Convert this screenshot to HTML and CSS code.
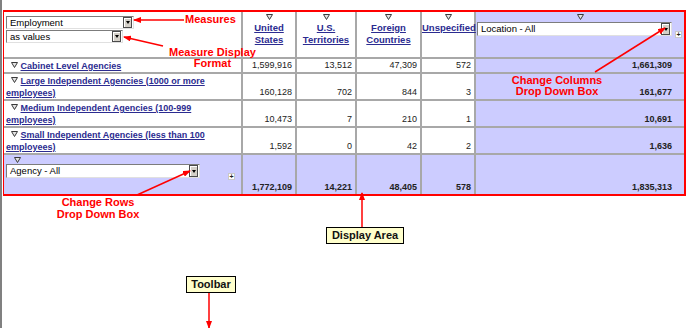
FILE: index.html
```html
<!DOCTYPE html>
<html>
<head>
<meta charset="utf-8">
<link rel="stylesheet" href="styles.css">
</head>
<body>
<div class="page">
  <div class="frame">
    <table class="grid">
      <colgroup>
        <col class="c1"><col class="c2"><col class="c3"><col class="c4"><col class="c5"><col class="c6">
      </colgroup>
      <tr class="r-head">
        <td class="corner">
          <div class="sel w-emp"><span class="sel-text">Employment</span><span class="btn"><i></i></span></div>
          <div class="sel w-val"><span class="sel-text">as values</span><span class="btn"><i></i></span></div>
        </td>
        <td class="colh"><svg class="tri" width="7" height="6" viewBox="0 0 7 6"><path d="M0.5 0.5H6.5L3.5 5.5Z" fill="#e4e4e4" stroke="#3a3a3a" stroke-width="1"/></svg><a href="#">United States</a></td>
        <td class="colh"><svg class="tri" width="7" height="6" viewBox="0 0 7 6"><path d="M0.5 0.5H6.5L3.5 5.5Z" fill="#e4e4e4" stroke="#3a3a3a" stroke-width="1"/></svg><a href="#">U.S. Territories</a></td>
        <td class="colh"><svg class="tri" width="7" height="6" viewBox="0 0 7 6"><path d="M0.5 0.5H6.5L3.5 5.5Z" fill="#e4e4e4" stroke="#3a3a3a" stroke-width="1"/></svg><a href="#">Foreign Countries</a></td>
        <td class="colh"><svg class="tri" width="7" height="6" viewBox="0 0 7 6"><path d="M0.5 0.5H6.5L3.5 5.5Z" fill="#e4e4e4" stroke="#3a3a3a" stroke-width="1"/></svg><a href="#">Unspecified</a></td>
        <td class="colh tot">
          <svg class="tri" width="7" height="6" viewBox="0 0 7 6"><path d="M0.5 0.5H6.5L3.5 5.5Z" fill="#e4e4e4" stroke="#3a3a3a" stroke-width="1"/></svg>
          <div class="sel-row">
            <div class="sel w-loc"><span class="sel-text">Location - All</span><span class="btn"><i></i></span></div>
            <span class="plus">+</span>
          </div>
        </td>
      </tr>
      <tr class="r-short">
        <td class="rowh"><svg class="tri rtri" width="7" height="6" viewBox="0 0 7 6"><path d="M0.5 0.5H6.5L3.5 5.5Z" fill="#e4e4e4" stroke="#3a3a3a" stroke-width="1"/></svg> <a href="#">Cabinet Level Agencies</a></td>
        <td class="num">1,599,916</td><td class="num">13,512</td><td class="num">47,309</td><td class="num">572</td><td class="num tot">1,661,309</td>
      </tr>
      <tr class="r-tall">
        <td class="rowh"><svg class="tri rtri" width="7" height="6" viewBox="0 0 7 6"><path d="M0.5 0.5H6.5L3.5 5.5Z" fill="#e4e4e4" stroke="#3a3a3a" stroke-width="1"/></svg> <a href="#">Large Independent Agencies (1000 or more employees)</a></td>
        <td class="num">160,128</td><td class="num">702</td><td class="num">844</td><td class="num">3</td><td class="num tot">161,677</td>
      </tr>
      <tr class="r-tall">
        <td class="rowh"><svg class="tri rtri" width="7" height="6" viewBox="0 0 7 6"><path d="M0.5 0.5H6.5L3.5 5.5Z" fill="#e4e4e4" stroke="#3a3a3a" stroke-width="1"/></svg> <a href="#">Medium Independent Agencies (100-999 employees)</a></td>
        <td class="num">10,473</td><td class="num">7</td><td class="num">210</td><td class="num">1</td><td class="num tot">10,691</td>
      </tr>
      <tr class="r-tall">
        <td class="rowh"><svg class="tri rtri" width="7" height="6" viewBox="0 0 7 6"><path d="M0.5 0.5H6.5L3.5 5.5Z" fill="#e4e4e4" stroke="#3a3a3a" stroke-width="1"/></svg> <a href="#">Small Independent Agencies (less than 100 employees)</a></td>
        <td class="num">1,592</td><td class="num">0</td><td class="num">42</td><td class="num">2</td><td class="num tot">1,636</td>
      </tr>
      <tr class="r-total">
        <td class="totalh">
          <svg class="tri rtri" width="7" height="6" viewBox="0 0 7 6"><path d="M0.5 0.5H6.5L3.5 5.5Z" fill="#e4e4e4" stroke="#3a3a3a" stroke-width="1"/></svg>
          <div class="sel-row">
            <div class="sel w-agy"><span class="sel-text">Agency - All</span><span class="btn"><i></i></span></div>
            <span class="plus">+</span>
          </div>
        </td>
        <td class="num sum">1,772,109</td><td class="num sum">14,221</td><td class="num sum">48,405</td><td class="num sum">578</td><td class="num sum tot">1,835,313</td>
      </tr>
    </table>
  </div>

  <div class="note n-measures">Measures</div>
  <div class="note n-format">Measure Display<br>Format</div>
  <div class="note n-cols">Change Columns<br>Drop Down Box</div>
  <div class="note n-rows">Change Rows<br>Drop Down Box</div>
  <div class="label l-display">Display Area</div>
  <div class="label l-toolbar">Toolbar</div>

  <svg class="arrows" width="700" height="328" viewBox="0 0 700 328">
    <defs>
      <marker id="ah" markerWidth="8" markerHeight="6" refX="7" refY="3" orient="auto" markerUnits="userSpaceOnUse">
        <path d="M0 0L8 3L0 6Z" fill="#ff0000"/>
      </marker>
    </defs>
    <g stroke="#ff0000" stroke-width="1.5" fill="none">
      <line x1="184" y1="20" x2="134" y2="20" marker-end="url(#ah)"/>
      <line x1="163" y1="46" x2="124" y2="37" marker-end="url(#ah)"/>
      <line x1="595" y1="72" x2="665" y2="28" marker-end="url(#ah)"/>
      <line x1="137" y1="195" x2="190" y2="171" marker-end="url(#ah)"/>
      <line x1="362" y1="227" x2="362" y2="193" marker-end="url(#ah)"/>
      <line x1="209" y1="293" x2="209" y2="328" marker-end="url(#ah)"/>
    </g>
  </svg>
</div>
</body>
</html>
```

FILE: styles.css
```css
html, body {
  margin: 0;
  padding: 0;
  background: #ffffff;
}

.page {
  position: relative;
  width: 700px;
  height: 328px;
  box-sizing: border-box;
  padding: 10px 0 0 3px;
  box-shadow: inset 2px 0 0 #808080;
  font-family: "Liberation Sans", Arial, sans-serif;
  overflow: hidden;
}

.frame {
  display: inline-block;
  border: 2px solid #ff0000;
  border-left-width: 1px;
  vertical-align: top;
}

.grid {
  border-collapse: separate;
  border-spacing: 0;
  table-layout: fixed;
  width: 680px;
}

.c1 { width: 239px; }
.c2 { width: 54px; }
.c3 { width: 60px; }
.c4 { width: 65px; }
.c5 { width: 54px; }
.c6 { width: 208px; }

.grid td {
  box-sizing: border-box;
  padding: 0;
  border-right: 2px solid #a8a8a8;
  border-bottom: 2px solid #a8a8a8;
  font-size: 9px;
  line-height: 11px;
  color: #222;
  background: #ffffff;
}
.grid td:last-child { border-right: none; }
.grid tr:last-child td { border-bottom: none; }

.r-head { height: 47px; }
.r-short { height: 15px; }
.r-tall { height: 26px; }
.r-total { height: 39px; }

.grid td.tot,
.r-total td {
  background: #ccccff;
}

/* selects */
.sel {
  display: flex;
  align-items: stretch;
  box-sizing: border-box;
  height: 13px;
  background: #ffffff;
  border: 1px solid;
  border-color: #7c7c7c #e0e0e0 #e0e0e0 #7c7c7c;
  font-size: 9.5px;
  line-height: 11px;
  color: #000;
  text-align: left;
}
.sel-text {
  flex: 1;
  padding-left: 3px;
  white-space: nowrap;
  overflow: hidden;
}
.btn {
  width: 9px;
  box-sizing: border-box;
  background: #d4d0c8;
  border: 1px solid #4a4a4a;
  box-shadow: inset 1px 1px 0 #ffffff;
  display: flex;
  align-items: center;
  justify-content: center;
  margin-right: 1px;
}
.btn i {
  width: 0;
  height: 0;
  border-left: 2.5px solid transparent;
  border-right: 2.5px solid transparent;
  border-top: 3px solid #000;
}
.w-emp { width: 128px; }
.w-val { width: 117px; margin-top: 1px; }
.w-loc { width: 195px; height: 14px; }
.w-agy { width: 194px; height: 14px; }

.corner {
  vertical-align: top;
  padding: 4px 0 0 2px !important;
}

/* column headers */
.colh {
  vertical-align: top;
  text-align: center;
  padding-top: 2px !important;
}
.tri {
  display: block;
  margin: 0 auto 2px;
}
.colh a,
.rowh a {
  color: #2b2b90;
  font-weight: bold;
  text-decoration: underline;
  line-height: 12px;
}
.colh a { font-size: 9.5px; }
.colh.tot .sel-row {
  display: flex;
  align-items: flex-end;
  padding-left: 1px;
  margin-top: 0;
}
.plus {
  display: inline-flex;
  align-items: center;
  justify-content: center;
  box-sizing: border-box;
  width: 7px;
  height: 7px;
  border: 1px solid #c8c8c8;
  background: #ffffff;
  font-size: 7px;
  line-height: 5px;
  font-weight: bold;
  color: #222;
  margin-left: 3px;
  margin-bottom: -2px;
}

/* row headers */
.rowh {
  vertical-align: top;
  padding: 1px 2px 0 2px !important;
}
.rtri {
  display: inline-block;
  margin: 0 0 0 5px;
  vertical-align: 1px;
}

/* totals row header */
.totalh {
  vertical-align: top;
  padding: 2px 6px 0 2px !important;
}
.totalh .sel-row {
  display: flex;
  align-items: flex-start;
  margin-top: 1px;
}
.totalh .plus {
  margin-left: auto;
  margin-top: 9px;
}
.totalh .rtri {
  display: block;
  margin-left: 8px;
}

/* numbers */
.num {
  text-align: right;
  vertical-align: bottom;
  padding: 0 3px 1px 0 !important;
  white-space: nowrap;
}
.num.tot,
.num.sum {
  font-weight: bold;
}
.num.tot { padding-right: 12px !important; }

/* annotations */
.note {
  position: absolute;
  color: #ff0000;
  font-weight: bold;
  font-size: 11px;
  line-height: 11px;
  text-align: center;
  white-space: nowrap;
}
.n-measures { left: 185px; top: 13px; text-align: left; line-height: 12px; }
.n-format { left: 160px; top: 47px; width: 105px; }
.n-cols { left: 507px; top: 75px; width: 100px; }
.n-rows { left: 48px; top: 196px; width: 100px; line-height: 12px; }

.label {
  position: absolute;
  box-sizing: border-box;
  height: 17px;
  border: 1px solid #000;
  background: #ffffcc;
  color: #111;
  font-weight: bold;
  font-size: 11px;
  line-height: 15px;
  text-align: center;
  white-space: nowrap;
}
.l-display { left: 326px; top: 227px; width: 78px; }
.l-toolbar { left: 186px; top: 276px; width: 50px; }

.arrows {
  position: absolute;
  left: 0;
  top: 0;
  pointer-events: none;
}
```
